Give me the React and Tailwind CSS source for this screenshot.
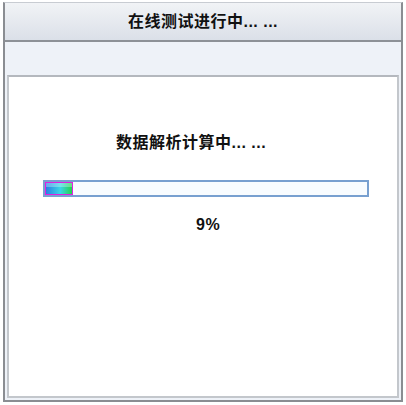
export default function App() {
  const percent = 9

  return (
    <div className="w-[406px] h-[405px] bg-white pl-[3px] pt-[2px] font-['Liberation_Sans','Noto_Sans_CJK_SC',sans-serif]">
      <div className="w-[400px] h-[400px] flex flex-col border-x-2 border-b-2 border-t border-x-[#8a8d92] border-b-[#8a8d92] border-t-[#c8ccd2] bg-[#eef2f8]">
        {/* Title bar */}
        <div className="h-[39px] shrink-0 flex items-center justify-center bg-gradient-to-b from-[#f1f3f6] to-[#dbe0e8] border-b-2 border-[#8d9197]">
          <span className="text-[16px] font-bold text-[#111] leading-none tracking-[0.5px]">在线测试进行中... ...</span>
        </div>

        {/* Content panel */}
        <div className="flex-1 flex flex-col pt-[33px] px-[2px] pb-[2px]">
          <div className="flex-1 bg-white border-2 border-[#c3c7cc] border-t-[#b4b8be] flex flex-col">
            <div className="pt-[58px] pl-[107px] text-[16px] font-bold text-[#111] leading-none tracking-[0.5px]">
              数据解析计算中... ...
            </div>

            <div className="mt-[29px] ml-[34px] w-[326px] h-[17px] border-2 border-[#78a0d0] bg-[#f8fcff] flex">
              <div
                className="h-full border border-[#e020e0] bg-[linear-gradient(90deg,#2a7fe4,#3ad6e6_55%,#22d44a)]"
                style={{ width: `${percent * 3.15}px` }}
              >
                <div className="h-1/3 bg-white/30" />
              </div>
            </div>

            <div className="mt-[20px] ml-[187px] text-[16px] font-bold text-[#111] leading-none tracking-[0.5px]">{percent}%</div>
          </div>
        </div>
      </div>
    </div>
  )
}
